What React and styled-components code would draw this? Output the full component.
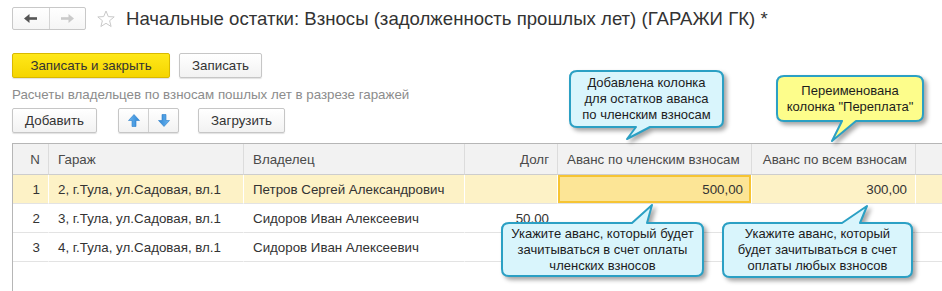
import React from 'react';
import styled, { createGlobalStyle } from 'styled-components';

const GlobalStyle = createGlobalStyle`
  html, body { margin: 0; padding: 0; background: #fff; }
  body { font-family: "Liberation Sans", Arial, sans-serif; }
`;

const Page = styled.div`
  position: relative;
  width: 942px;
  height: 291px;
  overflow: hidden;
  background: #fff;
  font-family: "Liberation Sans", Arial, sans-serif;
  color: #333;
`;

const Content = styled.div`
  padding: 7px 0 0 12px;
  display: flex;
  flex-direction: column;
`;

const TitleBar = styled.div`
  display: flex;
  align-items: center;
  height: 23px;
`;

const NavGroup = styled.div`
  display: flex;
  width: 74px;
  height: 23px;
  box-sizing: border-box;
  border: 1px solid #c8c8c8;
  border-radius: 2px;
  background: linear-gradient(#ffffff, #f5f5f5);
`;

const NavButton = styled.div`
  flex: 1;
  display: flex;
  align-items: center;
  justify-content: center;
  & + & {
    border-left: 1px solid #d4d4d4;
  }
`;

const StarBox = styled.div`
  margin-left: 11px;
  width: 18px;
  height: 18px;
  display: flex;
`;

const Title = styled.h1`
  margin: 0 0 0 11px;
  font-size: 18.6px;
  font-weight: normal;
  color: #333;
  white-space: nowrap;
  line-height: 23px;
`;

const Toolbar = styled.div`
  display: flex;
  align-items: center;
  margin-top: ${(p) => p.$mt}px;
  height: 25px;
`;

const Button = styled.button`
  box-sizing: border-box;
  width: ${(p) => p.$w}px;
  height: 25px;
  margin-left: ${(p) => p.$ml || 0}px;
  padding: 0;
  font: 13.33px "Liberation Sans", Arial, sans-serif;
  color: #333;
  border: 1px solid ${(p) => (p.$primary ? '#d9b900' : '#c6c6c6')};
  border-radius: 2px;
  background: ${(p) =>
    p.$primary ? 'linear-gradient(#ffe81a, #f5d500)' : 'linear-gradient(#ffffff, #f2f2f2)'};
  box-shadow: 0 1px 1px rgba(0, 0, 0, 0.12);
  white-space: nowrap;
`;

const ArrowGroup = styled.div`
  box-sizing: border-box;
  display: flex;
  height: 25px;
  margin-left: 21px;
  border: 1px solid #c6c6c6;
  border-radius: 2px;
  background: linear-gradient(#ffffff, #f2f2f2);
  box-shadow: 0 1px 1px rgba(0, 0, 0, 0.12);
`;

const ArrowButton = styled.div`
  width: 29px;
  display: flex;
  align-items: center;
  justify-content: center;
  & + & {
    border-left: 1px solid #cfcfcf;
  }
`;

const Caption = styled.div`
  margin-top: 9px;
  font-size: 13.33px;
  line-height: 16px;
  color: #8c8c8c;
  white-space: nowrap;
`;

const Table = styled.div`
  margin-top: 10px;
  width: 960px;
  height: 200px;
  box-sizing: border-box;
  border-left: 1px solid #b6b6b6;
  border-top: 1px solid #b6b6b6;
  display: grid;
  grid-template-columns: 36px 195px 221px 93px 194px 164px 57px;
  grid-auto-rows: min-content;
`;

const HeadCell = styled.div`
  box-sizing: border-box;
  height: 31px;
  background: #f2f2f2;
  border-bottom: 1px solid #cdcdcd;
  border-right: 1px solid #dcdcdc;
  display: flex;
  align-items: center;
  justify-content: ${(p) => (p.$right ? 'flex-end' : 'flex-start')};
  padding: ${(p) => (p.$right ? '0 8px 0 0' : '0 0 0 9px')};
  font-size: 13.33px;
  color: #4a4a4a;
  white-space: nowrap;
  overflow: hidden;
`;

const Cell = styled.div`
  box-sizing: border-box;
  height: 29px;
  background: ${(p) => (p.$selected ? '#fce596' : p.$current ? '#fdf2c6' : '#fff')};
  border-bottom: 1px solid #e3e3e3;
  border-right: 1px solid ${(p) => (p.$current ? '#ffffff' : 'transparent')};
  box-shadow: ${(p) => (p.$selected ? 'inset 0 0 0 2px #f6c433' : 'none')};
  display: flex;
  align-items: center;
  justify-content: ${(p) => (p.$right ? 'flex-end' : 'flex-start')};
  padding: ${(p) => (p.$right ? '0 8px 0 0' : '0 0 0 9px')};
  font-size: 13.33px;
  color: #333;
  white-space: nowrap;
  overflow: hidden;
`;

const CalloutBox = styled.div`
  position: absolute;
  left: ${(p) => p.$x}px;
  top: ${(p) => p.$y}px;
  width: ${(p) => p.$w}px;
  height: ${(p) => p.$h}px;
  z-index: 5;
`;

const CalloutShape = styled.svg`
  position: absolute;
  left: -20px;
  top: -20px;
  overflow: visible;
  filter: drop-shadow(3px 3px 2px rgba(0, 0, 0, 0.35));
`;

const CalloutText = styled.div`
  position: absolute;
  inset: 0;
  display: flex;
  align-items: center;
  justify-content: center;
  text-align: center;
  font-size: 13px;
  line-height: 16px;
  color: #1c1c1c;
  white-space: nowrap;
`;

function calloutPath(w, h, r, t) {
  if (t.side === 'bottom') {
    return [
      `M ${r} 0`,
      `L ${w - r} 0`,
      `Q ${w} 0 ${w} ${r}`,
      `L ${w} ${h - r}`,
      `Q ${w} ${h} ${w - r} ${h}`,
      `L ${t.b2} ${h}`,
      `L ${t.tx} ${t.ty}`,
      `L ${t.b1} ${h}`,
      `L ${r} ${h}`,
      `Q 0 ${h} 0 ${h - r}`,
      `L 0 ${r}`,
      `Q 0 0 ${r} 0`,
      'Z',
    ].join(' ');
  }
  return [
    `M ${r} 0`,
    `L ${t.b1} 0`,
    `L ${t.tx} ${t.ty}`,
    `L ${t.b2} 0`,
    `L ${w - r} 0`,
    `Q ${w} 0 ${w} ${r}`,
    `L ${w} ${h - r}`,
    `Q ${w} ${h} ${w - r} ${h}`,
    `L ${r} ${h}`,
    `Q 0 ${h} 0 ${h - r}`,
    `L 0 ${r}`,
    `Q 0 0 ${r} 0`,
    'Z',
  ].join(' ');
}

function Callout({ x, y, w, h, tail, fill, lines }) {
  return (
    <CalloutBox $x={x} $y={y} $w={w} $h={h}>
      <CalloutShape width={w + 40} height={h + 40}>
        <g transform="translate(20 20)">
          <path d={calloutPath(w, h, 7, tail)} fill={fill} stroke="#2ba0c4" strokeWidth="2" strokeLinejoin="round" />
        </g>
      </CalloutShape>
      <CalloutText>
        <div>
          {lines.map((l, i) => (
            <div key={i}>{l}</div>
          ))}
        </div>
      </CalloutText>
    </CalloutBox>
  );
}

const BackIcon = ({ color }) => (
  <svg width="13" height="9" viewBox="0 0 13 9">
    <polygon points="0,4.5 5.5,0 5.5,9" fill={color} />
    <rect x="5" y="3.2" width="8" height="2.6" fill={color} />
  </svg>
);

const FwdIcon = ({ color }) => (
  <svg width="13" height="9" viewBox="0 0 13 9">
    <polygon points="13,4.5 7.5,0 7.5,9" fill={color} />
    <rect x="0" y="3.2" width="8" height="2.6" fill={color} />
  </svg>
);

const Star = () => (
  <svg width="18" height="18" viewBox="0 0 18 18">
    <polygon
      points="9,1 11.3,6.6 17.2,6.9 12.6,10.7 14.1,16.5 9,13.3 3.9,16.5 5.4,10.7 0.8,6.9 6.7,6.6"
      fill="none"
      stroke="#c9c9c9"
      strokeWidth="1"
      strokeLinejoin="round"
    />
  </svg>
);

const BlueArrow = ({ down }) => (
  <svg width="12" height="13" viewBox="0 0 12 13">
    <defs>
      <linearGradient id={down ? 'gd' : 'gu'} x1="0" y1="0" x2="1" y2="0">
        <stop offset="0" stopColor="#6cb6ef" />
        <stop offset="1" stopColor="#2f86d6" />
      </linearGradient>
    </defs>
    <g transform={down ? 'rotate(180 6 6.5)' : undefined}>
      <polygon points="6,0.5 11.5,6.5 8,6.5 8,12.5 4,12.5 4,6.5 0.5,6.5" fill={`url(#${down ? 'gd' : 'gu'})`} stroke="#2a7dc9" strokeWidth="0.6" strokeLinejoin="round" />
    </g>
  </svg>
);

const columns = [
  { title: 'N', right: true },
  { title: 'Гараж' },
  { title: 'Владелец' },
  { title: 'Долг', right: true },
  { title: 'Аванс по членским взносам' },
  { title: 'Аванс по всем взносам', right: true },
  { title: '' },
];

const rows = [
  ['1', '2, г.Тула, ул.Садовая, вл.1', 'Петров Сергей Александрович', '', '500,00', '300,00', ''],
  ['2', '3, г.Тула, ул.Садовая, вл.1', 'Сидоров Иван Алексеевич', '50,00', '', '', ''],
  ['3', '4, г.Тула, ул.Садовая, вл.1', 'Сидоров Иван Алексеевич', '', '', '', ''],
];

const cellRight = [true, false, false, true, true, true, false];

export default function App() {
  return (
    <>
      <GlobalStyle />
      <Page>
        <Content>
          <TitleBar>
            <NavGroup>
              <NavButton>
                <BackIcon color="#555" />
              </NavButton>
              <NavButton>
                <FwdIcon color="#cacaca" />
              </NavButton>
            </NavGroup>
            <StarBox>
              <Star />
            </StarBox>
            <Title>Начальные остатки: Взносы (задолженность прошлых лет) (ГАРАЖИ ГК) *</Title>
          </TitleBar>

          <Toolbar $mt={23}>
            <Button $primary $w={158}>Записать и закрыть</Button>
            <Button $w={83} $ml={9}>Записать</Button>
          </Toolbar>

          <Caption>Расчеты владельцев по взносам пошлых лет в разрезе гаражей</Caption>

          <Toolbar $mt={5}>
            <Button $w={85}>Добавить</Button>
            <ArrowGroup>
              <ArrowButton>
                <BlueArrow />
              </ArrowButton>
              <ArrowButton>
                <BlueArrow down />
              </ArrowButton>
            </ArrowGroup>
            <Button $w={87} $ml={19}>Загрузить</Button>
          </Toolbar>

          <Table>
            {columns.map((c, i) => (
              <HeadCell key={i} $right={c.right}>
                {c.title}
              </HeadCell>
            ))}
            {rows.map((r, ri) =>
              r.map((v, ci) => (
                <Cell
                  key={`${ri}-${ci}`}
                  $right={cellRight[ci]}
                  $current={ri === 0}
                  $selected={ri === 0 && ci === 4}
                >
                  {v}
                </Cell>
              ))
            )}
          </Table>
        </Content>

        <Callout
          x={570}
          y={71}
          w={153}
          h={56}
          fill="#d9f5fc"
          tail={{ side: 'bottom', b1: 66, b2: 80, tx: 57, ty: 68 }}
          lines={['Добавлена колонка', 'для остатков аванса', 'по членским взносам']}
        />
        <Callout
          x={777}
          y={76}
          w={146}
          h={45}
          fill="#fdfd8b"
          tail={{ side: 'bottom', b1: 65, b2: 79, tx: 55, ty: 65 }}
          lines={['Переименована', 'колонка "Переплата"']}
        />
        <Callout
          x={502}
          y={223}
          w={201}
          h={53}
          fill="#d9f5fc"
          tail={{ side: 'top', b1: 130, b2: 145, tx: 150, ty: -18 }}
          lines={['Укажите аванс, который будет', 'зачитываться в счет оплаты', 'членских взносов']}
        />
        <Callout
          x={723}
          y={223}
          w={189}
          h={54}
          fill="#d9f5fc"
          tail={{ side: 'top', b1: 119, b2: 137, tx: 144, ty: -17 }}
          lines={['Укажите аванс, который', 'будет зачитываться в счет', 'оплаты любых взносов']}
        />
      </Page>
    </>
  );
}
